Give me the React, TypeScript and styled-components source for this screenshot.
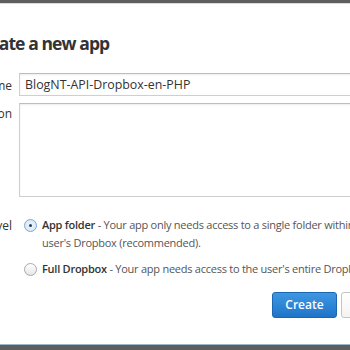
import React from "react";
import styled, { createGlobalStyle } from "styled-components";

const GlobalStyle = createGlobalStyle`
  html, body { margin: 0; padding: 0; background: #fff; overflow: hidden; }
  body { font-family: "Open Sans", "Liberation Sans", sans-serif; color: #333; }
`;

const Page = styled.div`
  display: flex;
  flex-direction: column;
  width: 350px;
  height: 350px;
  overflow: hidden;
`;

const Bar = styled.div<{ $bottom?: boolean }>`
  flex: none;
  height: 3px;
  background: #5e5e5e;
  ${(p) => (p.$bottom ? "border-top: 1px solid #9fb6c9; height: 5px;" : "border-bottom: 1px solid #c6e0f2;")}
`;

const Dialog = styled.div`
  flex: 1;
  display: flex;
  flex-direction: column;
  margin-left: -110px;
  width: 520px;
`;

const Title = styled.h2`
  margin: 27px 0 0 82px;
  font-size: 17.5px;
  line-height: 24px;
  font-weight: 700;
  letter-spacing: -0.9px;
  color: #333;
`;

const Form = styled.div`
  display: grid;
  grid-template-columns: 122px 1fr;
  column-gap: 7px;
  row-gap: 7px;
  margin-top: 18px;
`;

const Label = styled.div<{ $top: number }>`
  text-align: right;
  font-size: 12px;
  color: #333;
  padding-top: ${(p) => p.$top}px;
`;

const TextInput = styled.div`
  height: 23px;
  border: 1px solid #cfcfcf;
  border-top-color: #bdbdbd;
  box-shadow: inset 0 1px 2px rgba(0, 0, 0, 0.08);
  box-sizing: border-box;
  font-size: 12.4px;
  line-height: 21px;
  padding-left: 5px;
  color: #333;
`;

const TextArea = styled.div`
  height: 94px;
  border: 1px solid #cfcfcf;
  border-top-color: #bdbdbd;
  box-shadow: inset 0 1px 2px rgba(0, 0, 0, 0.08);
  box-sizing: border-box;
`;

const Options = styled.div`
  display: flex;
  flex-direction: column;
  gap: 8px;
  padding-top: 12px;
`;

const Option = styled.div`
  display: flex;
  gap: 5px;
  padding-left: 5px;
  font-size: 11px;
  line-height: 18px;
  letter-spacing: -0.25px;
  color: #555;
`;

const Radio = styled.span<{ $checked?: boolean }>`
  flex: none;
  width: 11px;
  height: 11px;
  margin-top: 3px;
  border-radius: 50%;
  border: 1px solid #a9a9a9;
  background: linear-gradient(#ffffff, #e6e6e6);
  display: flex;
  align-items: center;
  justify-content: center;
  ${(p) =>
    p.$checked
      ? "border-color: #7ba7d6; background: radial-gradient(circle, #eef5fc 0%, #d3e4f6 100%);"
      : ""}
  &::after {
    content: "";
    width: 3px;
    height: 3px;
    border-radius: 50%;
    background: ${(p) => (p.$checked ? "#2a3b55" : "transparent")};
  }
`;

const OptionText = styled.div`
  white-space: nowrap;
  b { color: #333; font-weight: 600; }
`;

const Actions = styled.div`
  display: flex;
  justify-content: flex-end;
  gap: 4px;
  margin-top: 14px;
  padding-right: 7px;
`;

const Button = styled.div<{ $primary?: boolean }>`
  height: 26px;
  box-sizing: border-box;
  border-radius: 3px;
  font-size: 12px;
  font-weight: 600;
  line-height: 24px;
  text-align: center;
  ${(p) =>
    p.$primary
      ? `width: 65px; color: #fff; background: linear-gradient(#3e97e2, #1f74c8); border: 1px solid #1b66b3;`
      : `width: 62px; color: #555; background: linear-gradient(#fff, #f3f3f3); border: 1px solid #c4c4c4;`}
`;

export default function App() {
  return (
    <Page>
      <GlobalStyle />
      <Bar />
      <Dialog>
        <Title>Create a new app</Title>
        <Form>
          <Label $top={4}>Name</Label>
          <TextInput>BlogNT-API-Dropbox-en-PHP</TextInput>
          <Label $top={2}>Description</Label>
          <TextArea />
          <Label $top={13}>Access level</Label>
          <Options>
            <Option>
              <Radio $checked />
              <OptionText>
                <b>App folder</b> - Your app only needs access to a single folder within the
                <br />
                user's Dropbox (recommended).
              </OptionText>
            </Option>
            <Option>
              <Radio />
              <OptionText>
                <b>Full Dropbox</b> - Your app needs access to the user's entire Dropbox.
              </OptionText>
            </Option>
          </Options>
        </Form>
        <Actions>
          <Button $primary>Create</Button>
          <Button>Cancel</Button>
        </Actions>
      </Dialog>
      <div style={{ flex: 1 }} />
      <Bar $bottom />
    </Page>
  );
}
